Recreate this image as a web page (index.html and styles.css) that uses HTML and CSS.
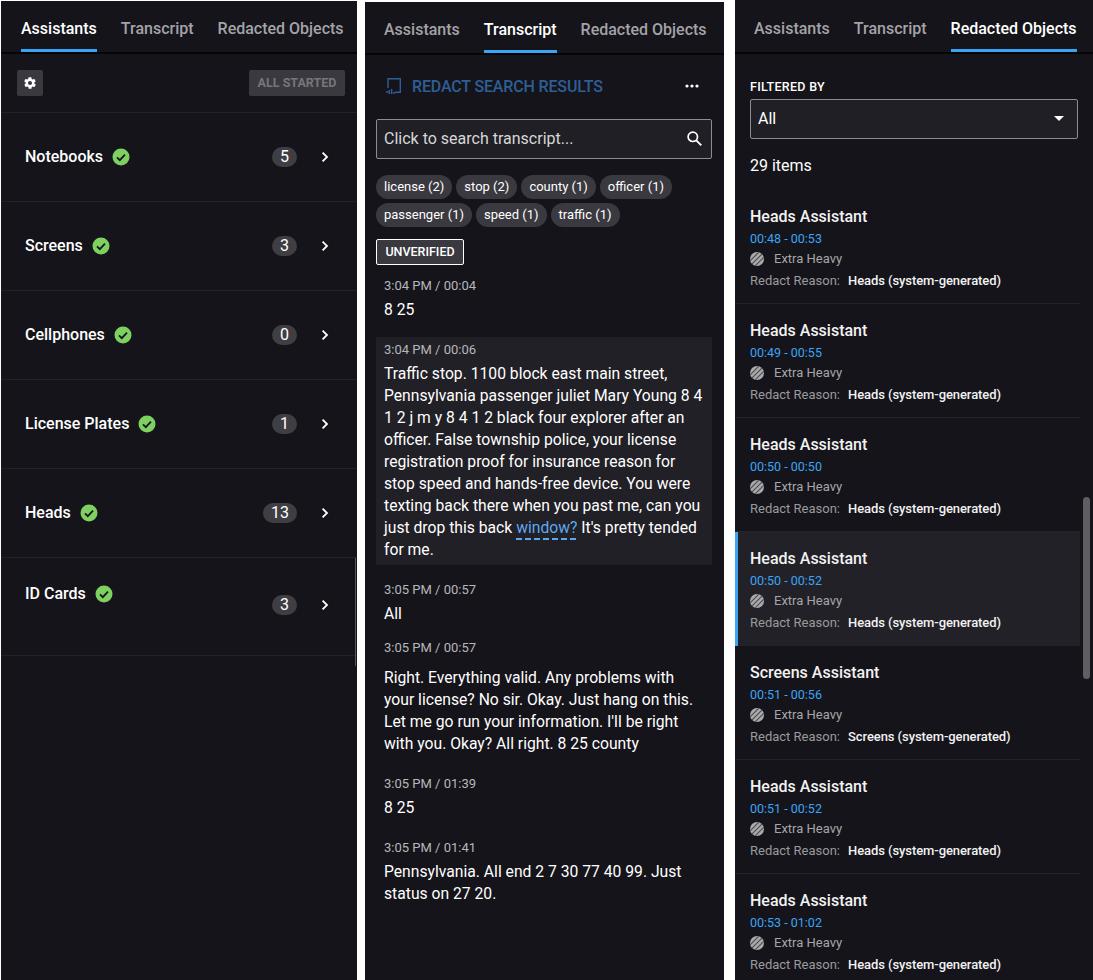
FILE: index.html
```html
<!DOCTYPE html>
<html lang="en">
<head>
<meta charset="utf-8">
<title>Redaction panels</title>
<link rel="stylesheet" href="styles.css">
</head>
<body>
<svg class="defs" width="0" height="0" aria-hidden="true">
  <defs>
    <symbol id="check" viewBox="0 0 18 18"><circle cx="9" cy="9" r="8.500" fill="#7ed160"/><path d="M5 9.300l2.800 2.800L13 6.600" fill="none" stroke="#15141a" stroke-width="1.800"/></symbol>
    <symbol id="chev" viewBox="0 0 10 12"><path d="M2.600 1.600L7 6l-4.400 4.400" fill="none" stroke="#fff" stroke-width="1.800"/></symbol>
    <symbol id="hatch" viewBox="0 0 14 14"><clipPath id="hc"><circle cx="7" cy="7" r="7"/></clipPath><g clip-path="url(#hc)"><rect width="14" height="14" fill="#aaa"/><path d="M-1 10L10-1M0 14L14 0M4 15L15 4" stroke="#4a494f" stroke-width="1.100"/></g></symbol>
  </defs>
</svg>

<section class="panel panel-a">
  <nav class="tabs">
    <span class="tab active">Assistants</span><span class="tab">Transcript</span><span class="tab">Redacted Objects</span>
  </nav>
  <div class="toolbar">
    <span class="gear-btn"><svg width="14" height="14" viewBox="0 0 24 24"><path fill="#fff" d="M19.400 13a7.800 7.800 0 0 0 0-2l2.100-1.600a.5.5 0 0 0 .1-.6l-2-3.500a.5.5 0 0 0-.6-.2l-2.500 1a7.300 7.300 0 0 0-1.700-1l-.4-2.700a.5.5 0 0 0-.5-.4h-4a.5.5 0 0 0-.5.4l-.4 2.700a7.300 7.300 0 0 0-1.700 1l-2.500-1a.5.5 0 0 0-.6.2l-2 3.500a.5.5 0 0 0 .1.6L4.600 11a7.800 7.800 0 0 0 0 2l-2.100 1.600a.5.5 0 0 0-.1.6l2 3.500c.1.2.4.3.6.2l2.500-1c.5.4 1.100.7 1.700 1l.4 2.700c0 .2.2.4.5.4h4c.3 0 .5-.2.5-.4l.4-2.700c.6-.3 1.200-.6 1.700-1l2.500 1c.2.1.5 0 .6-.2l2-3.500a.5.5 0 0 0-.1-.6zM12 15.500a3.500 3.500 0 1 1 0-7 3.500 3.500 0 0 1 0 7z"/></svg></span>
    <span class="started">ALL STARTED</span>
  </div>
  <div class="a-row"><span class="a-name">Notebooks</span><svg class="a-check"><use href="#check"/></svg><span class="count">5</span><svg class="a-chev"><use href="#chev"/></svg></div>
  <div class="a-row"><span class="a-name">Screens</span><svg class="a-check"><use href="#check"/></svg><span class="count">3</span><svg class="a-chev"><use href="#chev"/></svg></div>
  <div class="a-row"><span class="a-name">Cellphones</span><svg class="a-check"><use href="#check"/></svg><span class="count">0</span><svg class="a-chev"><use href="#chev"/></svg></div>
  <div class="a-row"><span class="a-name">License Plates</span><svg class="a-check"><use href="#check"/></svg><span class="count">1</span><svg class="a-chev"><use href="#chev"/></svg></div>
  <div class="a-row"><span class="a-name">Heads</span><svg class="a-check"><use href="#check"/></svg><span class="count wide">13</span><svg class="a-chev"><use href="#chev"/></svg></div>
  <div class="a-row tall"><span class="a-name">ID Cards</span><svg class="a-check"><use href="#check"/></svg><span class="count">3</span><svg class="a-chev"><use href="#chev"/></svg></div>
  <span class="thumb-a"></span>
</section>

<section class="panel panel-b">
  <nav class="tabs">
    <span class="tab">Assistants</span><span class="tab active">Transcript</span><span class="tab">Redacted Objects</span>
  </nav>
  <div class="redact-bar">
    <svg class="redact-icon" width="18" height="18" viewBox="0 0 18 18"><path d="M3 11V1.800h12.300v13.400H10" fill="none" stroke="#2d5f96" stroke-width="1.400"/><path d="M1 15h2M4.200 13v4M6.600 12v5M9 15v2" fill="none" stroke="#2d5f96" stroke-width="1.500"/></svg>
    <span class="redact-text">REDACT SEARCH RESULTS</span>
    <svg class="dots" width="14" height="4" viewBox="0 0 14 4"><circle cx="2" cy="2" r="1.600" fill="#fff"/><circle cx="7" cy="2" r="1.600" fill="#fff"/><circle cx="12" cy="2" r="1.600" fill="#fff"/></svg>
  </div>
  <div class="search">
    <span>Click to search transcript...</span>
    <svg width="17" height="17" viewBox="0 0 17 17"><circle cx="6.800" cy="6.800" r="4.700" fill="none" stroke="#fff" stroke-width="1.700"/><path d="M10.300 10.300l5 5" stroke="#fff" stroke-width="1.900"/></svg>
  </div>
  <div class="chips">
    <span class="chip">license (2)</span><span class="chip">stop (2)</span><span class="chip">county (1)</span><span class="chip">officer (1)</span><span class="chip">passenger (1)</span><span class="chip">speed (1)</span><span class="chip">traffic (1)</span>
  </div>
  <span class="unverified">UNVERIFIED</span>
  <div class="segment first"><div class="stamp">3:04 PM / 00:04</div><p>8 25</p></div>
  <div class="segment current"><div class="stamp">3:04 PM / 00:06</div><p>Traffic stop. 1100 block east main street, Pennsylvania passenger juliet Mary Young 8 4 1 2 j m y 8 4 1 2 black four explorer after an officer. False township police, your license registration proof for insurance reason for stop speed and hands-free device. You were texting back there when you past me, can you just drop this back <span class="hit">window?</span> It's pretty tended for me.</p></div>
  <div class="segment after"><div class="stamp">3:05 PM / 00:57</div><p>All</p></div>
  <div class="segment tight"><div class="stamp">3:05 PM / 00:57</div><p>Right. Everything valid. Any problems with your license? No sir. Okay. Just hang on this. Let me go run your information. I'll be right with you. Okay? All right. 8 25 county</p></div>
  <div class="segment"><div class="stamp">3:05 PM / 01:39</div><p>8 25</p></div>
  <div class="segment"><div class="stamp">3:05 PM / 01:41</div><p>Pennsylvania. All end 2 7 30 77 40 99. Just status on 27 20.</p></div>
</section>

<section class="panel panel-c">
  <nav class="tabs">
    <span class="tab">Assistants</span><span class="tab">Transcript</span><span class="tab active">Redacted Objects</span>
  </nav>
  <div class="filter">
    <div class="filter-label">FILTERED BY</div>
    <div class="select"><span>All</span><i class="caret"></i></div>
    <div class="total">29 items</div>
  </div>
  <article class="obj"><h3>Heads Assistant</h3><div class="time">00:48 - 00:53</div><div class="level"><svg class="hatch"><use href="#hatch"/></svg>Extra Heavy</div><div class="reason">Redact Reason:<b>Heads (system-generated)</b></div></article>
  <article class="obj"><h3>Heads Assistant</h3><div class="time">00:49 - 00:55</div><div class="level"><svg class="hatch"><use href="#hatch"/></svg>Extra Heavy</div><div class="reason">Redact Reason:<b>Heads (system-generated)</b></div></article>
  <article class="obj"><h3>Heads Assistant</h3><div class="time">00:50 - 00:50</div><div class="level"><svg class="hatch"><use href="#hatch"/></svg>Extra Heavy</div><div class="reason">Redact Reason:<b>Heads (system-generated)</b></div></article>
  <article class="obj selected"><h3>Heads Assistant</h3><div class="time">00:50 - 00:52</div><div class="level"><svg class="hatch"><use href="#hatch"/></svg>Extra Heavy</div><div class="reason">Redact Reason:<b>Heads (system-generated)</b></div></article>
  <article class="obj"><h3>Screens Assistant</h3><div class="time">00:51 - 00:56</div><div class="level"><svg class="hatch"><use href="#hatch"/></svg>Extra Heavy</div><div class="reason">Redact Reason:<b>Screens (system-generated)</b></div></article>
  <article class="obj"><h3>Heads Assistant</h3><div class="time">00:51 - 00:52</div><div class="level"><svg class="hatch"><use href="#hatch"/></svg>Extra Heavy</div><div class="reason">Redact Reason:<b>Heads (system-generated)</b></div></article>
  <article class="obj"><h3>Heads Assistant</h3><div class="time">00:53 - 01:02</div><div class="level"><svg class="hatch"><use href="#hatch"/></svg>Extra Heavy</div><div class="reason">Redact Reason:<b>Heads (system-generated)</b></div></article>
  <span class="thumb-c"></span>
</section>
</body>
</html>
```
FILE: styles.css
```css
* { box-sizing: border-box; }
html, body { height: 100%; }
body {
  margin: 0;
  background: #fff;
  display: flex;
  align-items: flex-start;
  height: 980px;
  overflow: hidden;
  font-family: Roboto, "Liberation Sans", sans-serif;
  color: #fff;
}
.defs { position: absolute; }
.panel { position: relative; background: #15141a; height: 980px; overflow: hidden; }
.panel-a { width: 356px; margin: 1px 0 0 1px; }
.panel-b { width: 359px; margin: 2px 0 0 8px; }
.panel-c { width: 358px; margin: 0 0 0 11px; }

.tabs {
  display: flex;
  gap: 24px;
  height: 53px;
  padding-left: 20px;
  border-bottom: 2px solid #050507;
  font-size: 16px;
  font-weight: 500;
  color: #a3a3a8;
}
.panel-b .tabs { padding-left: 19px; }
.panel-c .tabs { padding-left: 19px; height: 54px; }
.tab { height: 51px; padding-top: 18px; line-height: 20px; white-space: nowrap; }
.panel-c .tab { height: 52px; padding-top: 19px; }
.tab.active { color: #fff; border-bottom: 3px solid #3ba5f5; }

.toolbar {
  display: flex;
  justify-content: space-between;
  align-items: center;
  height: 59px;
  padding: 0 12px 0 16px;
  border-bottom: 1px solid #232228;
}
.gear-btn { width: 26px; height: 26px; background: #3a393f; display: flex; align-items: center; justify-content: center; border-radius: 2px; }
.started { height: 26px; width: 96px; background: #3a393f; color: #76767a; font-size: 12.500px; font-weight: 700; line-height: 26px; text-align: center; border-radius: 2px; }

.a-row {
  display: flex;
  align-items: center;
  height: 89px;
  padding: 0 27px 2px 24px;
  border-bottom: 1px solid #232228;
}
.a-row.tall { height: 98px; align-items: flex-start; padding-top: 26px; padding-bottom: 0; }
.a-name { font-size: 16px; font-weight: 500; }
.a-check { width: 18px; height: 18px; margin: 2px 0 0 9px; }
.count {
  margin: 2px 0 0 auto;
  width: 25px; height: 20px;
  border-radius: 10px;
  background: #3f3e43;
  font-size: 16px;
  line-height: 20px;
  text-align: center;
}
.count.wide { width: 34px; }
.a-chev { width: 10px; height: 12px; margin: 2px 0 0 23px; }
.a-row.tall .a-check { margin-top: 1px; }
.a-row.tall .count { margin-top: 11px; }
.a-row.tall .a-chev { margin-top: 15px; }
.thumb-a { position: absolute; left: 354px; top: 557px; width: 1px; height: 108px; background: #55555a; }

.redact-bar { display: flex; align-items: center; height: 64px; padding: 0 25px 2px 20px; }
.redact-icon { margin-right: 9px; }
.redact-text { font-size: 16px; font-weight: 500; color: #2d5f96; flex: 1; letter-spacing: -.15px; }
.search {
  display: flex; align-items: center; justify-content: space-between;
  margin: 0 12px 0 11px;
  height: 40px;
  padding: 0 8px 2px 7px;
  background: #201f25;
  border: 1px solid #8d8d91;
  border-radius: 2px;
  font-size: 16px;
  color: #d7d7d9;
}
.chips { display: flex; flex-wrap: wrap; gap: 4px; margin: 16px 30px 0 11px; }
.chip { height: 24px; padding: 0 8px; line-height: 23px; border-radius: 12px; background: #3a393f; font-size: 13px; white-space: nowrap; }
.unverified {
  display: block;
  width: 88px; height: 26px;
  margin: 12px 0 0 11px;
  border: 1px solid #fff;
  border-radius: 2px;
  background: #3a393f;
  font-size: 12.500px;
  font-weight: 500;
  line-height: 24px;
  text-align: center;
}
.segment { margin: 19px 12px 0 11px; padding: 0 8px; }
.segment.first { margin-top: 11px; }
.segment.current { margin-top: 16px; padding: 3px 8px 4px; background: #212026; }
.segment.after { margin-top: 15px; }
.segment.tight { margin-top: 13px; }
.segment.tight p { margin-top: 9px; }
.stamp { font-size: 13px; line-height: 20px; color: #b7b7ba; }
.segment p { margin: 3px 0 0; font-size: 15.700px; line-height: 22px; color: #fff; }
.hit {
  color: #5ca8f0;
  padding-bottom: 3px;
  background: repeating-linear-gradient(90deg, #5ca8f0 0 6px, transparent 6px 9px) left bottom / 100% 2px no-repeat;
}

.filter { padding: 0 15px; }
.filter-label { font-size: 12.500px; font-weight: 500; line-height: 16px; padding-top: 25px; letter-spacing: .3px; }
.select {
  display: flex; align-items: center; justify-content: space-between;
  height: 40px; margin-top: 4px;
  padding: 0 13px 2px 7px;
  background: #201f25;
  border: 1px solid #8d8d91;
  border-radius: 2px;
  font-size: 16px;
}
.caret { width: 0; height: 0; border-left: 5px solid transparent; border-right: 5px solid transparent; border-top: 5px solid #fff; }
.total { font-size: 16px; line-height: 20px; margin-top: 17px; margin-bottom: 14px; }
.obj { position: relative; height: 114px; width: 345px; padding: 17px 15px 0; border-bottom: 1px solid #232228; }
.obj h3 { margin: 0; font-size: 16px; font-weight: 500; line-height: 20px; color: #f2f2f2; }
.time { font-size: 12.500px; line-height: 16px; margin-top: 4px; color: #3ba5f5; }
.level { display: flex; align-items: center; gap: 10px; font-size: 13px; line-height: 20px; color: #a6a6a9; margin-top: 2px; }
.hatch { width: 14px; height: 14px; }
.reason { font-size: 13px; line-height: 18px; color: #9a9a9d; margin-top: 3px; white-space: nowrap; }
.reason b { font-weight: 500; color: #f2f2f2; margin-left: 8px; letter-spacing: -.08px; }
.obj.selected { background: #222127; border-left: 3px solid #3ba5f5; padding-left: 12px; border-bottom: none; }
.thumb-c { position: absolute; right: 3px; top: 497px; width: 7px; height: 182px; border-radius: 4px; background: #5e5e63; }
```
